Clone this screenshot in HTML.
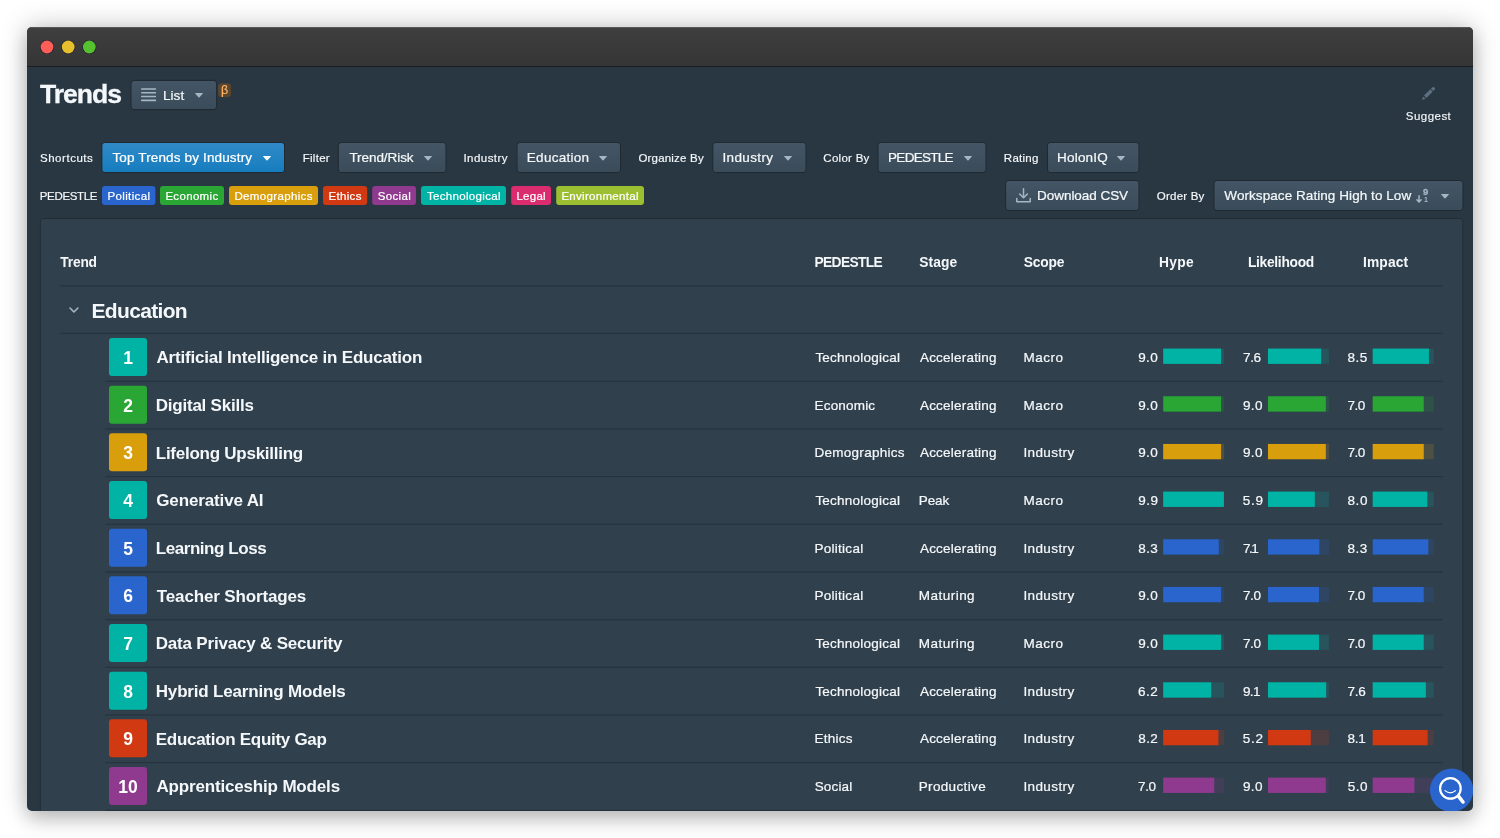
<!DOCTYPE html>
<html lang="en"><head><meta charset="utf-8"><title>Trends</title>
<style>
html,body{margin:0;padding:0;background:#fff;}
body{width:1500px;height:838px;overflow:hidden;position:relative;font-family:"Liberation Sans",sans-serif;}
#win{position:absolute;left:27px;top:26.5px;width:1446px;height:784px;border-radius:5px;overflow:hidden;background:#293742;
 box-shadow:0 0 26px rgba(0,0,0,.26),0 10px 18px rgba(0,0,0,.14);}
#in{position:absolute;left:-27px;top:-26.5px;width:1500px;height:838px;will-change:transform;}
#in div{position:absolute;box-sizing:border-box;}
.t{position:absolute;white-space:pre;line-height:1;color:#f5f8fa;}
svg{position:absolute;overflow:visible;}
.btn{background:linear-gradient(#435564,#3a4c5a);box-shadow:0 0 0 1px rgba(16,22,26,.42);border-radius:2.5px;}
.pbtn{background:linear-gradient(#2f88c6,#167dbe);box-shadow:0 0 0 1px rgba(16,22,26,.42);border-radius:2.5px;}
</style></head><body><div id="win"><div id="in">
<div style="left:27px;top:26.5px;width:1446px;height:39.5px;background:linear-gradient(#3f3f3f,#353535);box-shadow:inset 0 1px 0 rgba(255,255,255,.13);"></div>
<div style="left:27px;top:65.5px;width:1446px;height:1.2px;background:#1b1c1d;"></div>
<svg style="left:27px;top:27px" width="100" height="39" viewBox="27 27 100 39"><circle cx="47.0" cy="47" r="7" fill="rgba(22,22,48,.8)"/><circle cx="47.0" cy="47" r="6.4" fill="#fd5e57"/><circle cx="68.2" cy="47" r="7" fill="rgba(22,22,48,.8)"/><circle cx="68.2" cy="47" r="6.4" fill="#e6bf2d"/><circle cx="89.3" cy="47" r="7" fill="rgba(22,22,48,.8)"/><circle cx="89.3" cy="47" r="6.4" fill="#55c12f"/></svg>
<svg style="left:0;top:0" width="0" height="0"><defs><linearGradient id="gb" x1="0" y1="0" x2="0" y2="1"><stop offset="0" stop-color="#445665"/><stop offset="1" stop-color="#3a4c5a"/></linearGradient><linearGradient id="gp" x1="0" y1="0" x2="0" y2="1"><stop offset="0" stop-color="#318ac8"/><stop offset="1" stop-color="#167dbe"/></linearGradient></defs></svg>
<svg style="left:0;top:0" width="1500" height="838" viewBox="0 0 1500 838"><rect x="131.10" y="80.40" width="85.50" height="29.20" rx="3.3" fill="none" stroke="rgba(16,22,26,.42)"/><rect x="131.60" y="80.90" width="84.50" height="28.20" rx="2.8" fill="url(#gb)"/><rect x="218.20" y="83.20" width="12.80" height="13.70" rx="3" fill="#58462f"/><rect x="101.90" y="142.60" width="182.60" height="29.90" rx="3.3" fill="none" stroke="rgba(16,22,26,.42)"/><rect x="102.40" y="143.10" width="181.60" height="28.90" rx="2.8" fill="url(#gp)"/><rect x="338.40" y="142.60" width="107.50" height="29.90" rx="3.3" fill="none" stroke="rgba(16,22,26,.42)"/><rect x="338.90" y="143.10" width="106.50" height="28.90" rx="2.8" fill="url(#gb)"/><rect x="517.10" y="142.60" width="103.40" height="29.90" rx="3.3" fill="none" stroke="rgba(16,22,26,.42)"/><rect x="517.60" y="143.10" width="102.40" height="28.90" rx="2.8" fill="url(#gb)"/><rect x="712.90" y="142.60" width="93.00" height="29.90" rx="3.3" fill="none" stroke="rgba(16,22,26,.42)"/><rect x="713.40" y="143.10" width="92.00" height="28.90" rx="2.8" fill="url(#gb)"/><rect x="878.10" y="142.60" width="107.80" height="29.90" rx="3.3" fill="none" stroke="rgba(16,22,26,.42)"/><rect x="878.60" y="143.10" width="106.80" height="28.90" rx="2.8" fill="url(#gb)"/><rect x="1047.50" y="142.60" width="91.40" height="29.90" rx="3.3" fill="none" stroke="rgba(16,22,26,.42)"/><rect x="1048.00" y="143.10" width="90.40" height="28.90" rx="2.8" fill="url(#gb)"/><rect x="102.00" y="186.00" width="53.40" height="19.00" rx="3" fill="#2965cc"/><rect x="160.00" y="186.00" width="64.00" height="19.00" rx="3" fill="#29a634"/><rect x="229.00" y="186.00" width="89.00" height="19.00" rx="3" fill="#d99e0b"/><rect x="323.00" y="186.00" width="44.20" height="19.00" rx="3" fill="#d13913"/><rect x="372.20" y="186.00" width="43.80" height="19.00" rx="3" fill="#8f398f"/><rect x="421.00" y="186.00" width="85.00" height="19.00" rx="3" fill="#00b3a4"/><rect x="511.20" y="186.00" width="39.80" height="19.00" rx="3" fill="#db2c6f"/><rect x="556.20" y="186.00" width="87.80" height="19.00" rx="3" fill="#9bbf30"/><rect x="1005.70" y="180.60" width="133.20" height="29.90" rx="3.3" fill="none" stroke="rgba(16,22,26,.42)"/><rect x="1006.20" y="181.10" width="132.20" height="28.90" rx="2.8" fill="url(#gb)"/><rect x="1214.10" y="180.60" width="248.80" height="29.90" rx="3.3" fill="none" stroke="rgba(16,22,26,.42)"/><rect x="1214.60" y="181.10" width="247.80" height="28.90" rx="2.8" fill="url(#gb)"/><rect x="40.4" y="218.5" width="1422.4" height="641" rx="3.5" fill="none" stroke="rgba(16,22,26,.3)"/><rect x="40.9" y="219" width="1421.4" height="640" rx="3" fill="#30404d"/><rect x="59.50" y="285.40" width="1383.50" height="1.10" fill="rgba(16,22,26,.31)"/><rect x="59.50" y="332.80" width="1383.50" height="1.10" fill="rgba(16,22,26,.31)"/><rect x="109.00" y="338.00" width="38.00" height="38.00" rx="3" fill="#00b3a4"/><rect x="1163.20" y="348.60" width="61.00" height="15.30" fill="rgba(0,179,164,0.18)"/><rect x="1163.20" y="348.60" width="57.87" height="15.30" fill="#00b3a4"/><rect x="1267.95" y="348.60" width="61.00" height="15.30" fill="rgba(0,179,164,0.18)"/><rect x="1267.95" y="348.60" width="53.18" height="15.30" fill="#00b3a4"/><rect x="1372.70" y="348.60" width="61.00" height="15.30" fill="rgba(0,179,164,0.18)"/><rect x="1372.70" y="348.60" width="56.24" height="15.30" fill="#00b3a4"/><rect x="105.30" y="380.75" width="1337.70" height="1.10" fill="rgba(16,22,26,.31)"/><rect x="109.00" y="385.67" width="38.00" height="38.00" rx="3" fill="#29a634"/><rect x="1163.20" y="396.27" width="61.00" height="15.30" fill="rgba(41,166,52,0.18)"/><rect x="1163.20" y="396.27" width="57.87" height="15.30" fill="#29a634"/><rect x="1267.95" y="396.27" width="61.00" height="15.30" fill="rgba(41,166,52,0.18)"/><rect x="1267.95" y="396.27" width="57.87" height="15.30" fill="#29a634"/><rect x="1372.70" y="396.27" width="61.00" height="15.30" fill="rgba(41,166,52,0.18)"/><rect x="1372.70" y="396.27" width="51.04" height="15.30" fill="#29a634"/><rect x="105.30" y="428.42" width="1337.70" height="1.10" fill="rgba(16,22,26,.31)"/><rect x="109.00" y="433.34" width="38.00" height="38.00" rx="3" fill="#d99e0b"/><rect x="1163.20" y="443.94" width="61.00" height="15.30" fill="rgba(217,158,11,0.18)"/><rect x="1163.20" y="443.94" width="57.87" height="15.30" fill="#d99e0b"/><rect x="1267.95" y="443.94" width="61.00" height="15.30" fill="rgba(217,158,11,0.18)"/><rect x="1267.95" y="443.94" width="57.87" height="15.30" fill="#d99e0b"/><rect x="1372.70" y="443.94" width="61.00" height="15.30" fill="rgba(217,158,11,0.18)"/><rect x="1372.70" y="443.94" width="51.04" height="15.30" fill="#d99e0b"/><rect x="105.30" y="476.09" width="1337.70" height="1.10" fill="rgba(16,22,26,.31)"/><rect x="109.00" y="481.01" width="38.00" height="38.00" rx="3" fill="#00b3a4"/><rect x="1163.20" y="491.61" width="61.00" height="15.30" fill="rgba(0,179,164,0.18)"/><rect x="1163.20" y="491.61" width="60.69" height="15.30" fill="#00b3a4"/><rect x="1267.95" y="491.61" width="61.00" height="15.30" fill="rgba(0,179,164,0.18)"/><rect x="1267.95" y="491.61" width="46.85" height="15.30" fill="#00b3a4"/><rect x="1372.70" y="491.61" width="61.00" height="15.30" fill="rgba(0,179,164,0.18)"/><rect x="1372.70" y="491.61" width="54.56" height="15.30" fill="#00b3a4"/><rect x="105.30" y="523.76" width="1337.70" height="1.10" fill="rgba(16,22,26,.31)"/><rect x="109.00" y="528.68" width="38.00" height="38.00" rx="3" fill="#2965cc"/><rect x="1163.20" y="539.28" width="61.00" height="15.30" fill="rgba(41,101,204,0.18)"/><rect x="1163.20" y="539.28" width="55.57" height="15.30" fill="#2965cc"/><rect x="1267.95" y="539.28" width="61.00" height="15.30" fill="rgba(41,101,204,0.18)"/><rect x="1267.95" y="539.28" width="51.40" height="15.30" fill="#2965cc"/><rect x="1372.70" y="539.28" width="61.00" height="15.30" fill="rgba(41,101,204,0.18)"/><rect x="1372.70" y="539.28" width="55.57" height="15.30" fill="#2965cc"/><rect x="105.30" y="571.43" width="1337.70" height="1.10" fill="rgba(16,22,26,.31)"/><rect x="109.00" y="576.35" width="38.00" height="38.00" rx="3" fill="#2965cc"/><rect x="1163.20" y="586.95" width="61.00" height="15.30" fill="rgba(41,101,204,0.18)"/><rect x="1163.20" y="586.95" width="57.87" height="15.30" fill="#2965cc"/><rect x="1267.95" y="586.95" width="61.00" height="15.30" fill="rgba(41,101,204,0.18)"/><rect x="1267.95" y="586.95" width="51.04" height="15.30" fill="#2965cc"/><rect x="1372.70" y="586.95" width="61.00" height="15.30" fill="rgba(41,101,204,0.18)"/><rect x="1372.70" y="586.95" width="51.04" height="15.30" fill="#2965cc"/><rect x="105.30" y="619.10" width="1337.70" height="1.10" fill="rgba(16,22,26,.31)"/><rect x="109.00" y="624.02" width="38.00" height="38.00" rx="3" fill="#00b3a4"/><rect x="1163.20" y="634.62" width="61.00" height="15.30" fill="rgba(0,179,164,0.18)"/><rect x="1163.20" y="634.62" width="57.87" height="15.30" fill="#00b3a4"/><rect x="1267.95" y="634.62" width="61.00" height="15.30" fill="rgba(0,179,164,0.18)"/><rect x="1267.95" y="634.62" width="51.04" height="15.30" fill="#00b3a4"/><rect x="1372.70" y="634.62" width="61.00" height="15.30" fill="rgba(0,179,164,0.18)"/><rect x="1372.70" y="634.62" width="51.04" height="15.30" fill="#00b3a4"/><rect x="105.30" y="666.77" width="1337.70" height="1.10" fill="rgba(16,22,26,.31)"/><rect x="109.00" y="671.69" width="38.00" height="38.00" rx="3" fill="#00b3a4"/><rect x="1163.20" y="682.29" width="61.00" height="15.30" fill="rgba(0,179,164,0.18)"/><rect x="1163.20" y="682.29" width="48.03" height="15.30" fill="#00b3a4"/><rect x="1267.95" y="682.29" width="61.00" height="15.30" fill="rgba(0,179,164,0.18)"/><rect x="1267.95" y="682.29" width="58.19" height="15.30" fill="#00b3a4"/><rect x="1372.70" y="682.29" width="61.00" height="15.30" fill="rgba(0,179,164,0.18)"/><rect x="1372.70" y="682.29" width="53.18" height="15.30" fill="#00b3a4"/><rect x="105.30" y="714.44" width="1337.70" height="1.10" fill="rgba(16,22,26,.31)"/><rect x="109.00" y="719.36" width="38.00" height="38.00" rx="3" fill="#d13913"/><rect x="1163.20" y="729.96" width="61.00" height="15.30" fill="rgba(209,57,19,0.18)"/><rect x="1163.20" y="729.96" width="55.24" height="15.30" fill="#d13913"/><rect x="1267.95" y="729.96" width="61.00" height="15.30" fill="rgba(209,57,19,0.18)"/><rect x="1267.95" y="729.96" width="42.80" height="15.30" fill="#d13913"/><rect x="1372.70" y="729.96" width="61.00" height="15.30" fill="rgba(209,57,19,0.18)"/><rect x="1372.70" y="729.96" width="54.90" height="15.30" fill="#d13913"/><rect x="105.30" y="762.11" width="1337.70" height="1.10" fill="rgba(16,22,26,.31)"/><rect x="109.00" y="767.03" width="38.00" height="38.00" rx="3" fill="#8f398f"/><rect x="1163.20" y="777.63" width="61.00" height="15.30" fill="rgba(143,57,143,0.18)"/><rect x="1163.20" y="777.63" width="51.04" height="15.30" fill="#8f398f"/><rect x="1267.95" y="777.63" width="61.00" height="15.30" fill="rgba(143,57,143,0.18)"/><rect x="1267.95" y="777.63" width="57.87" height="15.30" fill="#8f398f"/><rect x="1372.70" y="777.63" width="61.00" height="15.30" fill="rgba(143,57,143,0.18)"/><rect x="1372.70" y="777.63" width="41.70" height="15.30" fill="#8f398f"/><rect x="105.30" y="809.78" width="1337.70" height="1.10" fill="rgba(16,22,26,.31)"/></svg>
<svg style="left:141px;top:88.3px" width="15.2" height="13.2" viewBox="0 0 15.2 13.2"><g fill="#a7b6c2"><rect x="0" y="0.15" width="15.2" height="1.55" rx=".7"/><rect x="0" y="3.97" width="15.2" height="1.55" rx=".7"/><rect x="0" y="7.78" width="15.2" height="1.55" rx=".7"/><rect x="0" y="11.6" width="15.2" height="1.55" rx=".7"/></g></svg>
<svg style="left:195.00px;top:92.90px" width="8" height="4.6" viewBox="0 0 8 4.6"><path d="M0.4 0 H7.6 Q8.3 0 7.8 .6 L4.5 4.3 Q4 4.8 3.5 4.3 L.2 .6 Q-.3 0 .4 0Z" fill="#a7b6c2"/></svg>
<svg style="left:1421px;top:86px" width="15" height="15" viewBox="0 0 16 16"><path d="M3.25 10.26l2.47 2.47 6.69-6.69-2.46-2.48-6.7 6.7zM.99 14.99l3.86-1.39-2.46-2.44-1.4 3.83zm12.25-14c-.48 0-.92.2-1.24.51l-1.44 1.44 2.47 2.47 1.44-1.44c.32-.32.51-.75.51-1.24.01-.95-.77-1.74-1.74-1.74z" fill="#5c7080"/></svg>
<svg style="left:262.50px;top:156.00px" width="8" height="4.6" viewBox="0 0 8 4.6"><path d="M0.4 0 H7.6 Q8.3 0 7.8 .6 L4.5 4.3 Q4 4.8 3.5 4.3 L.2 .6 Q-.3 0 .4 0Z" fill="#ffffff"/></svg>
<svg style="left:424.40px;top:156.00px" width="8" height="4.6" viewBox="0 0 8 4.6"><path d="M0.4 0 H7.6 Q8.3 0 7.8 .6 L4.5 4.3 Q4 4.8 3.5 4.3 L.2 .6 Q-.3 0 .4 0Z" fill="#a7b6c2"/></svg>
<svg style="left:598.60px;top:156.00px" width="8" height="4.6" viewBox="0 0 8 4.6"><path d="M0.4 0 H7.6 Q8.3 0 7.8 .6 L4.5 4.3 Q4 4.8 3.5 4.3 L.2 .6 Q-.3 0 .4 0Z" fill="#a7b6c2"/></svg>
<svg style="left:783.60px;top:156.00px" width="8" height="4.6" viewBox="0 0 8 4.6"><path d="M0.4 0 H7.6 Q8.3 0 7.8 .6 L4.5 4.3 Q4 4.8 3.5 4.3 L.2 .6 Q-.3 0 .4 0Z" fill="#a7b6c2"/></svg>
<svg style="left:964.00px;top:156.00px" width="8" height="4.6" viewBox="0 0 8 4.6"><path d="M0.4 0 H7.6 Q8.3 0 7.8 .6 L4.5 4.3 Q4 4.8 3.5 4.3 L.2 .6 Q-.3 0 .4 0Z" fill="#a7b6c2"/></svg>
<svg style="left:1117.40px;top:156.00px" width="8" height="4.6" viewBox="0 0 8 4.6"><path d="M0.4 0 H7.6 Q8.3 0 7.8 .6 L4.5 4.3 Q4 4.8 3.5 4.3 L.2 .6 Q-.3 0 .4 0Z" fill="#a7b6c2"/></svg>
<svg style="left:1016px;top:188.4px" width="15" height="14.6" viewBox="0 0 15 14.6"><g fill="none" stroke="#a7b6c2" stroke-width="1.5" stroke-linecap="round" stroke-linejoin="round"><path d="M7.5 .8 V9.6 M3.6 6 L7.5 9.8 L11.4 6"/><path d="M.8 10.4 V13.8 H14.2 V10.4"/></g></svg>
<svg style="left:1441.00px;top:194.00px" width="8" height="4.6" viewBox="0 0 8 4.6"><path d="M0.4 0 H7.6 Q8.3 0 7.8 .6 L4.5 4.3 Q4 4.8 3.5 4.3 L.2 .6 Q-.3 0 .4 0Z" fill="#a7b6c2"/></svg>
<svg style="left:1414px;top:186px" width="16" height="20" viewBox="1414 186 16 20"><path d="M1419 195.7 V201.6 M1416.9 199.7 L1419 202 L1421.1 199.7" fill="none" stroke="#a7b6c2" stroke-width="1.5" stroke-linecap="round" stroke-linejoin="round"/></svg>
<svg style="left:68.8px;top:306.7px" width="9.9" height="6.1" viewBox="0 0 9.9 6.1"><path d="M1 1 L4.95 5 L8.9 1" fill="none" stroke="#a7b6c2" stroke-width="1.6" stroke-linecap="round" stroke-linejoin="round"/></svg>
<svg style="left:1420px;top:760px" width="60" height="60" viewBox="1420 760 60 60"><circle cx="1451.6" cy="790.3" r="21.7" fill="#2965cc"/><g fill="none" stroke="#fff" stroke-linecap="round"><circle cx="1450.4" cy="788.4" r="10.3" stroke-width="2.2"/><path d="M1458.6 796.4 L1463.0 802.0" stroke-width="3.6"/><path d="M1445.0 790.6 Q1450.3 795.2 1455.6 790.6" stroke-width="1.25"/></g></svg>
<span class="t" style="left:39.98px;top:79px;line-height:30px;font-size:26.6px;font-weight:700;letter-spacing:-1.017px;-webkit-text-stroke:0.3px;">Trends</span>
<span class="t" style="left:162.88px;top:88px;line-height:15px;font-size:13.5px;letter-spacing:0.120px;-webkit-text-stroke:0.22px;">List</span>
<span class="t" style="left:174.70px;width:100px;text-align:center;top:83px;line-height:14px;font-size:12.5px;color:#ffb366;-webkit-text-stroke:0.2px;">β</span>
<span class="t" style="left:1405.86px;top:110px;line-height:12px;font-size:11.5px;letter-spacing:0.458px;-webkit-text-stroke:0.15px;">Suggest</span>
<span class="t" style="left:39.94px;top:152px;line-height:12px;font-size:11.5px;letter-spacing:0.541px;-webkit-text-stroke:0.18px;">Shortcuts</span>
<span class="t" style="left:112.42px;top:150px;line-height:15px;font-size:13.5px;color:#ffffff;letter-spacing:0.146px;-webkit-text-stroke:0.22px;">Top Trends by Industry</span>
<span class="t" style="left:302.64px;top:152px;line-height:12px;font-size:11.5px;letter-spacing:0.299px;-webkit-text-stroke:0.18px;">Filter</span>
<span class="t" style="left:349.42px;top:150px;line-height:15px;font-size:13.5px;letter-spacing:-0.064px;-webkit-text-stroke:0.22px;">Trend/Risk</span>
<span class="t" style="left:463.48px;top:152px;line-height:12px;font-size:11.5px;letter-spacing:0.450px;-webkit-text-stroke:0.18px;">Industry</span>
<span class="t" style="left:526.87px;top:150px;line-height:15px;font-size:13.5px;letter-spacing:0.254px;-webkit-text-stroke:0.22px;">Education</span>
<span class="t" style="left:638.40px;top:152px;line-height:12px;font-size:11.5px;letter-spacing:0.198px;-webkit-text-stroke:0.18px;">Organize By</span>
<span class="t" style="left:722.38px;top:150px;line-height:15px;font-size:13.5px;letter-spacing:0.389px;-webkit-text-stroke:0.22px;">Industry</span>
<span class="t" style="left:823.33px;top:152px;line-height:12px;font-size:11.5px;letter-spacing:0.276px;-webkit-text-stroke:0.18px;">Color By</span>
<span class="t" style="left:888.06px;top:150px;line-height:15px;font-size:13.5px;letter-spacing:-0.715px;-webkit-text-stroke:0.22px;">PEDESTLE</span>
<span class="t" style="left:1003.80px;top:152px;line-height:12px;font-size:11.5px;letter-spacing:0.280px;-webkit-text-stroke:0.18px;">Rating</span>
<span class="t" style="left:1057.06px;top:150px;line-height:15px;font-size:13.5px;letter-spacing:0.202px;-webkit-text-stroke:0.22px;">HolonIQ</span>
<span class="t" style="left:39.80px;top:190px;line-height:12px;font-size:11.5px;letter-spacing:-0.348px;-webkit-text-stroke:0.18px;">PEDESTLE</span>
<span class="t" style="left:107.38px;top:190px;line-height:12px;font-size:11.5px;color:#ffffff;letter-spacing:0.384px;-webkit-text-stroke:0.22px;">Political</span>
<span class="t" style="left:165.38px;top:190px;line-height:12px;font-size:11.5px;color:#ffffff;letter-spacing:0.325px;-webkit-text-stroke:0.22px;">Economic</span>
<span class="t" style="left:234.38px;top:190px;line-height:12px;font-size:11.5px;color:#ffffff;letter-spacing:0.353px;-webkit-text-stroke:0.22px;">Demographics</span>
<span class="t" style="left:328.38px;top:190px;line-height:12px;font-size:11.5px;color:#ffffff;letter-spacing:0.348px;-webkit-text-stroke:0.22px;">Ethics</span>
<span class="t" style="left:377.63px;top:190px;line-height:12px;font-size:11.5px;color:#ffffff;letter-spacing:0.351px;-webkit-text-stroke:0.22px;">Social</span>
<span class="t" style="left:426.98px;top:190px;line-height:12px;font-size:11.5px;color:#ffffff;letter-spacing:0.319px;-webkit-text-stroke:0.22px;">Technological</span>
<span class="t" style="left:516.38px;top:190px;line-height:12px;font-size:11.5px;color:#ffffff;letter-spacing:0.289px;-webkit-text-stroke:0.22px;">Legal</span>
<span class="t" style="left:561.38px;top:190px;line-height:12px;font-size:11.5px;color:#ffffff;letter-spacing:0.302px;-webkit-text-stroke:0.22px;">Environmental</span>
<span class="t" style="left:1037.06px;top:188px;line-height:15px;font-size:13.5px;letter-spacing:-0.046px;-webkit-text-stroke:0.22px;">Download CSV</span>
<span class="t" style="left:1156.85px;top:190px;line-height:12px;font-size:11.5px;letter-spacing:0.212px;-webkit-text-stroke:0.18px;">Order By</span>
<span class="t" style="left:1224.35px;top:188px;line-height:15px;font-size:13.5px;letter-spacing:0.065px;-webkit-text-stroke:0.22px;">Workspace Rating High to Low</span>
<span class="t" style="left:1375.70px;width:100px;text-align:center;top:186px;line-height:11px;font-size:9.5px;font-weight:700;color:#a7b6c2;-webkit-text-stroke:0.3px;">9</span>
<span class="t" style="left:1376.00px;width:100px;text-align:center;top:196px;line-height:7px;font-size:7px;font-weight:700;color:#a7b6c2;">1</span>
<span class="t" style="left:60.37px;top:255px;line-height:15px;font-size:13.8px;font-weight:700;letter-spacing:-0.230px;">Trend</span>
<span class="t" style="left:814.55px;top:255px;line-height:15px;font-size:13.8px;font-weight:700;letter-spacing:-0.676px;">PEDESTLE</span>
<span class="t" style="left:919.31px;top:255px;line-height:15px;font-size:13.8px;font-weight:700;letter-spacing:0.089px;">Stage</span>
<span class="t" style="left:1023.73px;top:255px;line-height:15px;font-size:13.8px;font-weight:700;letter-spacing:-0.148px;">Scope</span>
<span class="t" style="left:1158.92px;top:255px;line-height:15px;font-size:13.8px;font-weight:700;letter-spacing:0.316px;">Hype</span>
<span class="t" style="left:1247.92px;top:255px;line-height:15px;font-size:13.8px;font-weight:700;letter-spacing:-0.297px;">Likelihood</span>
<span class="t" style="left:1362.90px;top:255px;line-height:15px;font-size:13.8px;font-weight:700;letter-spacing:0.165px;">Impact</span>
<span class="t" style="left:91.52px;top:299px;line-height:23px;font-size:21px;font-weight:700;letter-spacing:-0.676px;">Education</span>
<span class="t" style="left:78.00px;width:100px;text-align:center;top:348px;line-height:20px;font-size:17.5px;font-weight:700;color:#ffffff;">1</span>
<span class="t" style="left:156.50px;top:348px;line-height:19px;font-size:17px;font-weight:700;letter-spacing:-0.205px;">Artificial Intelligence in Education</span>
<span class="t" style="left:815.38px;top:350px;line-height:15px;font-size:13.5px;letter-spacing:0.238px;-webkit-text-stroke:0.22px;">Technological</span>
<span class="t" style="left:919.93px;top:350px;line-height:15px;font-size:13.5px;letter-spacing:0.212px;-webkit-text-stroke:0.22px;">Accelerating</span>
<span class="t" style="left:1023.43px;top:350px;line-height:15px;font-size:13.5px;letter-spacing:0.542px;-webkit-text-stroke:0.22px;">Macro</span>
<span class="t" style="left:1138.16px;top:350px;line-height:15px;font-size:13.5px;letter-spacing:0.427px;-webkit-text-stroke:0.22px;">9.0</span>
<span class="t" style="left:1242.99px;top:350px;line-height:15px;font-size:13.5px;letter-spacing:-0.329px;-webkit-text-stroke:0.22px;">7.6</span>
<span class="t" style="left:1347.48px;top:350px;line-height:15px;font-size:13.5px;letter-spacing:0.531px;-webkit-text-stroke:0.22px;">8.5</span>
<span class="t" style="left:78.00px;width:100px;text-align:center;top:396px;line-height:20px;font-size:17.5px;font-weight:700;color:#ffffff;">2</span>
<span class="t" style="left:155.76px;top:396px;line-height:19px;font-size:17px;font-weight:700;letter-spacing:-0.225px;">Digital Skills</span>
<span class="t" style="left:814.55px;top:398px;line-height:15px;font-size:13.5px;letter-spacing:0.179px;-webkit-text-stroke:0.22px;">Economic</span>
<span class="t" style="left:919.93px;top:398px;line-height:15px;font-size:13.5px;letter-spacing:0.212px;-webkit-text-stroke:0.22px;">Accelerating</span>
<span class="t" style="left:1023.43px;top:398px;line-height:15px;font-size:13.5px;letter-spacing:0.542px;-webkit-text-stroke:0.22px;">Macro</span>
<span class="t" style="left:1138.16px;top:398px;line-height:15px;font-size:13.5px;letter-spacing:0.427px;-webkit-text-stroke:0.22px;">9.0</span>
<span class="t" style="left:1242.91px;top:398px;line-height:15px;font-size:13.5px;letter-spacing:0.435px;-webkit-text-stroke:0.22px;">9.0</span>
<span class="t" style="left:1347.54px;top:398px;line-height:15px;font-size:13.5px;letter-spacing:-0.461px;-webkit-text-stroke:0.22px;">7.0</span>
<span class="t" style="left:78.00px;width:100px;text-align:center;top:443px;line-height:20px;font-size:17.5px;font-weight:700;color:#ffffff;">3</span>
<span class="t" style="left:155.76px;top:444px;line-height:19px;font-size:17px;font-weight:700;letter-spacing:-0.254px;">Lifelong Upskilling</span>
<span class="t" style="left:814.55px;top:445px;line-height:15px;font-size:13.5px;letter-spacing:0.261px;-webkit-text-stroke:0.22px;">Demographics</span>
<span class="t" style="left:919.93px;top:445px;line-height:15px;font-size:13.5px;letter-spacing:0.212px;-webkit-text-stroke:0.22px;">Accelerating</span>
<span class="t" style="left:1023.38px;top:445px;line-height:15px;font-size:13.5px;letter-spacing:0.397px;-webkit-text-stroke:0.22px;">Industry</span>
<span class="t" style="left:1138.16px;top:445px;line-height:15px;font-size:13.5px;letter-spacing:0.427px;-webkit-text-stroke:0.22px;">9.0</span>
<span class="t" style="left:1242.91px;top:445px;line-height:15px;font-size:13.5px;letter-spacing:0.435px;-webkit-text-stroke:0.22px;">9.0</span>
<span class="t" style="left:1347.54px;top:445px;line-height:15px;font-size:13.5px;letter-spacing:-0.461px;-webkit-text-stroke:0.22px;">7.0</span>
<span class="t" style="left:78.00px;width:100px;text-align:center;top:491px;line-height:20px;font-size:17.5px;font-weight:700;color:#ffffff;">4</span>
<span class="t" style="left:156.25px;top:491px;line-height:19px;font-size:17px;font-weight:700;letter-spacing:-0.137px;">Generative AI</span>
<span class="t" style="left:815.38px;top:493px;line-height:15px;font-size:13.5px;letter-spacing:0.238px;-webkit-text-stroke:0.22px;">Technological</span>
<span class="t" style="left:918.71px;top:493px;line-height:15px;font-size:13.5px;letter-spacing:-0.069px;-webkit-text-stroke:0.22px;">Peak</span>
<span class="t" style="left:1023.43px;top:493px;line-height:15px;font-size:13.5px;letter-spacing:0.542px;-webkit-text-stroke:0.22px;">Macro</span>
<span class="t" style="left:1138.16px;top:493px;line-height:15px;font-size:13.5px;letter-spacing:0.506px;-webkit-text-stroke:0.22px;">9.9</span>
<span class="t" style="left:1242.79px;top:493px;line-height:15px;font-size:13.5px;letter-spacing:0.698px;-webkit-text-stroke:0.22px;">5.9</span>
<span class="t" style="left:1347.48px;top:493px;line-height:15px;font-size:13.5px;letter-spacing:0.616px;-webkit-text-stroke:0.22px;">8.0</span>
<span class="t" style="left:78.00px;width:100px;text-align:center;top:539px;line-height:20px;font-size:17.5px;font-weight:700;color:#ffffff;">5</span>
<span class="t" style="left:155.76px;top:539px;line-height:19px;font-size:17px;font-weight:700;letter-spacing:-0.443px;">Learning Loss</span>
<span class="t" style="left:814.55px;top:541px;line-height:15px;font-size:13.5px;letter-spacing:0.261px;-webkit-text-stroke:0.22px;">Political</span>
<span class="t" style="left:919.93px;top:541px;line-height:15px;font-size:13.5px;letter-spacing:0.212px;-webkit-text-stroke:0.22px;">Accelerating</span>
<span class="t" style="left:1023.38px;top:541px;line-height:15px;font-size:13.5px;letter-spacing:0.397px;-webkit-text-stroke:0.22px;">Industry</span>
<span class="t" style="left:1138.24px;top:541px;line-height:15px;font-size:13.5px;letter-spacing:0.431px;-webkit-text-stroke:0.22px;">8.3</span>
<span class="t" style="left:1242.99px;top:541px;line-height:15px;font-size:13.5px;letter-spacing:-1.465px;-webkit-text-stroke:0.22px;">7.1</span>
<span class="t" style="left:1347.48px;top:541px;line-height:15px;font-size:13.5px;letter-spacing:0.500px;-webkit-text-stroke:0.22px;">8.3</span>
<span class="t" style="left:78.00px;width:100px;text-align:center;top:586px;line-height:20px;font-size:17.5px;font-weight:700;color:#ffffff;">6</span>
<span class="t" style="left:156.84px;top:587px;line-height:19px;font-size:17px;font-weight:700;letter-spacing:-0.152px;">Teacher Shortages</span>
<span class="t" style="left:814.55px;top:588px;line-height:15px;font-size:13.5px;letter-spacing:0.261px;-webkit-text-stroke:0.22px;">Political</span>
<span class="t" style="left:918.71px;top:588px;line-height:15px;font-size:13.5px;letter-spacing:0.486px;-webkit-text-stroke:0.22px;">Maturing</span>
<span class="t" style="left:1023.38px;top:588px;line-height:15px;font-size:13.5px;letter-spacing:0.397px;-webkit-text-stroke:0.22px;">Industry</span>
<span class="t" style="left:1138.16px;top:588px;line-height:15px;font-size:13.5px;letter-spacing:0.427px;-webkit-text-stroke:0.22px;">9.0</span>
<span class="t" style="left:1242.99px;top:588px;line-height:15px;font-size:13.5px;letter-spacing:-0.402px;-webkit-text-stroke:0.22px;">7.0</span>
<span class="t" style="left:1347.54px;top:588px;line-height:15px;font-size:13.5px;letter-spacing:-0.461px;-webkit-text-stroke:0.22px;">7.0</span>
<span class="t" style="left:78.00px;width:100px;text-align:center;top:634px;line-height:20px;font-size:17.5px;font-weight:700;color:#ffffff;">7</span>
<span class="t" style="left:155.76px;top:634px;line-height:19px;font-size:17px;font-weight:700;letter-spacing:-0.194px;">Data Privacy &amp; Security</span>
<span class="t" style="left:815.38px;top:636px;line-height:15px;font-size:13.5px;letter-spacing:0.238px;-webkit-text-stroke:0.22px;">Technological</span>
<span class="t" style="left:918.71px;top:636px;line-height:15px;font-size:13.5px;letter-spacing:0.486px;-webkit-text-stroke:0.22px;">Maturing</span>
<span class="t" style="left:1023.43px;top:636px;line-height:15px;font-size:13.5px;letter-spacing:0.542px;-webkit-text-stroke:0.22px;">Macro</span>
<span class="t" style="left:1138.16px;top:636px;line-height:15px;font-size:13.5px;letter-spacing:0.427px;-webkit-text-stroke:0.22px;">9.0</span>
<span class="t" style="left:1242.99px;top:636px;line-height:15px;font-size:13.5px;letter-spacing:-0.402px;-webkit-text-stroke:0.22px;">7.0</span>
<span class="t" style="left:1347.54px;top:636px;line-height:15px;font-size:13.5px;letter-spacing:-0.461px;-webkit-text-stroke:0.22px;">7.0</span>
<span class="t" style="left:78.00px;width:100px;text-align:center;top:682px;line-height:20px;font-size:17.5px;font-weight:700;color:#ffffff;">8</span>
<span class="t" style="left:155.76px;top:682px;line-height:19px;font-size:17px;font-weight:700;letter-spacing:-0.174px;">Hybrid Learning Models</span>
<span class="t" style="left:815.38px;top:684px;line-height:15px;font-size:13.5px;letter-spacing:0.238px;-webkit-text-stroke:0.22px;">Technological</span>
<span class="t" style="left:919.93px;top:684px;line-height:15px;font-size:13.5px;letter-spacing:0.212px;-webkit-text-stroke:0.22px;">Accelerating</span>
<span class="t" style="left:1023.38px;top:684px;line-height:15px;font-size:13.5px;letter-spacing:0.397px;-webkit-text-stroke:0.22px;">Industry</span>
<span class="t" style="left:1138.12px;top:684px;line-height:15px;font-size:13.5px;letter-spacing:0.457px;-webkit-text-stroke:0.22px;">6.2</span>
<span class="t" style="left:1242.91px;top:684px;line-height:15px;font-size:13.5px;letter-spacing:-0.580px;-webkit-text-stroke:0.22px;">9.1</span>
<span class="t" style="left:1347.54px;top:684px;line-height:15px;font-size:13.5px;letter-spacing:-0.214px;-webkit-text-stroke:0.22px;">7.6</span>
<span class="t" style="left:78.00px;width:100px;text-align:center;top:729px;line-height:20px;font-size:17.5px;font-weight:700;color:#ffffff;">9</span>
<span class="t" style="left:155.76px;top:730px;line-height:19px;font-size:17px;font-weight:700;letter-spacing:-0.289px;">Education Equity Gap</span>
<span class="t" style="left:814.55px;top:731px;line-height:15px;font-size:13.5px;letter-spacing:0.220px;-webkit-text-stroke:0.22px;">Ethics</span>
<span class="t" style="left:919.93px;top:731px;line-height:15px;font-size:13.5px;letter-spacing:0.212px;-webkit-text-stroke:0.22px;">Accelerating</span>
<span class="t" style="left:1023.38px;top:731px;line-height:15px;font-size:13.5px;letter-spacing:0.397px;-webkit-text-stroke:0.22px;">Industry</span>
<span class="t" style="left:1138.24px;top:731px;line-height:15px;font-size:13.5px;letter-spacing:0.396px;-webkit-text-stroke:0.22px;">8.2</span>
<span class="t" style="left:1242.79px;top:731px;line-height:15px;font-size:13.5px;letter-spacing:0.690px;-webkit-text-stroke:0.22px;">5.2</span>
<span class="t" style="left:1347.48px;top:731px;line-height:15px;font-size:13.5px;letter-spacing:-0.280px;-webkit-text-stroke:0.22px;">8.1</span>
<span class="t" style="left:78.00px;width:100px;text-align:center;top:777px;line-height:20px;font-size:17.5px;font-weight:700;color:#ffffff;">10</span>
<span class="t" style="left:156.50px;top:777px;line-height:19px;font-size:17px;font-weight:700;letter-spacing:-0.172px;">Apprenticeship Models</span>
<span class="t" style="left:814.72px;top:779px;line-height:15px;font-size:13.5px;letter-spacing:0.141px;-webkit-text-stroke:0.22px;">Social</span>
<span class="t" style="left:918.71px;top:779px;line-height:15px;font-size:13.5px;letter-spacing:0.351px;-webkit-text-stroke:0.22px;">Productive</span>
<span class="t" style="left:1023.38px;top:779px;line-height:15px;font-size:13.5px;letter-spacing:0.397px;-webkit-text-stroke:0.22px;">Industry</span>
<span class="t" style="left:1138.10px;top:779px;line-height:15px;font-size:13.5px;letter-spacing:-0.427px;-webkit-text-stroke:0.22px;">7.0</span>
<span class="t" style="left:1242.91px;top:779px;line-height:15px;font-size:13.5px;letter-spacing:0.435px;-webkit-text-stroke:0.22px;">9.0</span>
<span class="t" style="left:1347.65px;top:779px;line-height:15px;font-size:13.5px;letter-spacing:0.533px;-webkit-text-stroke:0.22px;">5.0</span>
</div></div></body></html>
